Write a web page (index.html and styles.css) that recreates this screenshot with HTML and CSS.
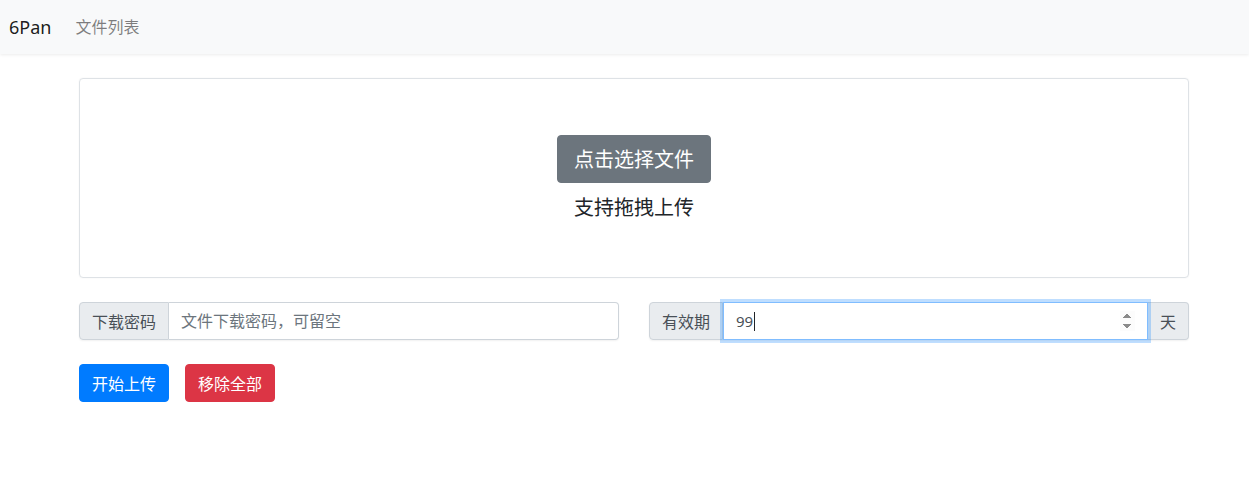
FILE: index.html
```html
<!DOCTYPE html>
<html lang="zh-CN">
<head>
<meta charset="utf-8">
<title>6Pan</title>
<link rel="stylesheet" href="styles.css">
</head>
<body>
<nav class="navbar">
  <a class="brand" href="#">6Pan</a>
  <a class="nav-link" href="#">文件列表</a>
</nav>
<main class="container">
  <section class="dropzone">
    <button class="btn btn-lg btn-secondary" type="button">点击选择文件</button>
    <p class="drop-hint">支持拖拽上传</p>
  </section>
  <div class="form-row">
    <div class="input-group">
      <span class="addon">下载密码</span>
      <input class="control" type="text" placeholder="文件下载密码，可留空">
    </div>
    <div class="input-group">
      <span class="addon">有效期</span>
      <div class="focus-wrap">
        <input class="control control-focus" type="number" value="99" autofocus>
        <span class="fake-caret"></span>
      </div>
      <span class="addon addon-append">天</span>
    </div>
  </div>
  <div class="actions">
    <button class="btn btn-primary" type="button">开始上传</button>
    <button class="btn btn-danger" type="button">移除全部</button>
  </div>
</main>
</body>
</html>
```
FILE: styles.css
```css
* { box-sizing: border-box; }
html, body { margin: 0; padding: 0; }
body {
  font-family: "Segoe UI", "Noto Sans", "Noto Sans CJK SC", sans-serif;
  font-size: 16px;
  line-height: 1.5;
  color: #212529;
  background: #fff;
}
.navbar {
  display: flex;
  align-items: center;
  height: 54px;
  padding: 0 9px;
  background: #f8f9fa;
  box-shadow: 0 1px 3px rgba(0,0,0,.08);
}
.brand {
  font-family: "Noto Sans", sans-serif;
  font-size: 18px;
  color: rgba(0,0,0,.9);
  text-decoration: none;
  margin-right: 24px;
}
.nav-link {
  font-family: "Noto Sans CJK SC", sans-serif;
  font-size: 16px;
  color: rgba(0,0,0,.5);
  text-decoration: none;
  margin-top: -2px;
}
.container {
  width: 1110px;
  margin-left: 79px;
  padding-top: 24px;
}
.dropzone {
  height: 200px;
  border: 1px solid #dee2e6;
  border-radius: 4px;
  box-shadow: 0 0 2px rgba(0,0,0,.06);
  display: flex;
  flex-direction: column;
  align-items: center;
  padding-top: 56px;
}
.drop-hint {
  margin: 10px 0 0;
  font-family: "Noto Sans CJK SC", sans-serif;
  font-size: 20px;
  line-height: 28px;
  color: #212529;
}
.btn {
  font-family: "Noto Sans CJK SC", sans-serif;
  font-size: 16px;
  line-height: 24px;
  height: 38px;
  padding: 6px 12px;
  border: 1px solid transparent;
  border-radius: 4px;
  color: #fff;
  cursor: pointer;
}
.btn-lg {
  font-size: 20px;
  height: 48px;
  padding: 8px 16px;
  line-height: 30px;
  border-radius: 4px;
}
.btn-secondary { background: #6c757d; border-color: #6c757d; }
.btn-primary { background: #007bff; border-color: #007bff; }
.btn-danger { background: #dc3545; border-color: #dc3545; }
.form-row {
  display: grid;
  grid-template-columns: 540px 540px;
  column-gap: 30px;
  margin-top: 24px;
}
.input-group {
  display: flex;
  height: 38px;
  border-radius: 4px;
  box-shadow: 0 1px 2px rgba(0,0,0,.06);
}
.addon {
  display: flex;
  align-items: center;
  padding: 0 12px;
  font-family: "Noto Sans CJK SC", sans-serif;
  font-size: 16px;
  color: #495057;
  background: #e9ecef;
  border: 1px solid #ced4da;
  border-radius: 4px 0 0 4px;
}
.addon-append {
  border-radius: 0 4px 4px 0;
  border-left: 0;
}
.control {
  flex: 1;
  min-width: 0;
  height: 38px;
  padding: 6px 12px;
  font-family: "Noto Sans", "Noto Sans CJK SC", sans-serif;
  font-size: 15px;
  color: #495057;
  border: 1px solid #ced4da;
  border-left: 0;
  border-radius: 0 4px 4px 0;
  outline: none;
}
.control::placeholder { color: #6c757d; font-family: "Noto Sans CJK SC", sans-serif; font-size: 16px; }
.focus-wrap {
  flex: 1;
  display: flex;
  position: relative;
  z-index: 1;
}
.control-focus {
  width: 100%;
  border: 1px solid #80bdff;
  border-radius: 0;
  box-shadow: 0 0 0 3px rgba(0,123,255,.25);
  caret-color: #212529;
}
.control-focus::-webkit-inner-spin-button { opacity: 1; }
.fake-caret {
  position: absolute;
  left: 31px;
  top: 10px;
  width: 1px;
  height: 19px;
  background: #212529;
}
.actions {
  display: flex;
  gap: 16px;
  margin-top: 24px;
}
```
